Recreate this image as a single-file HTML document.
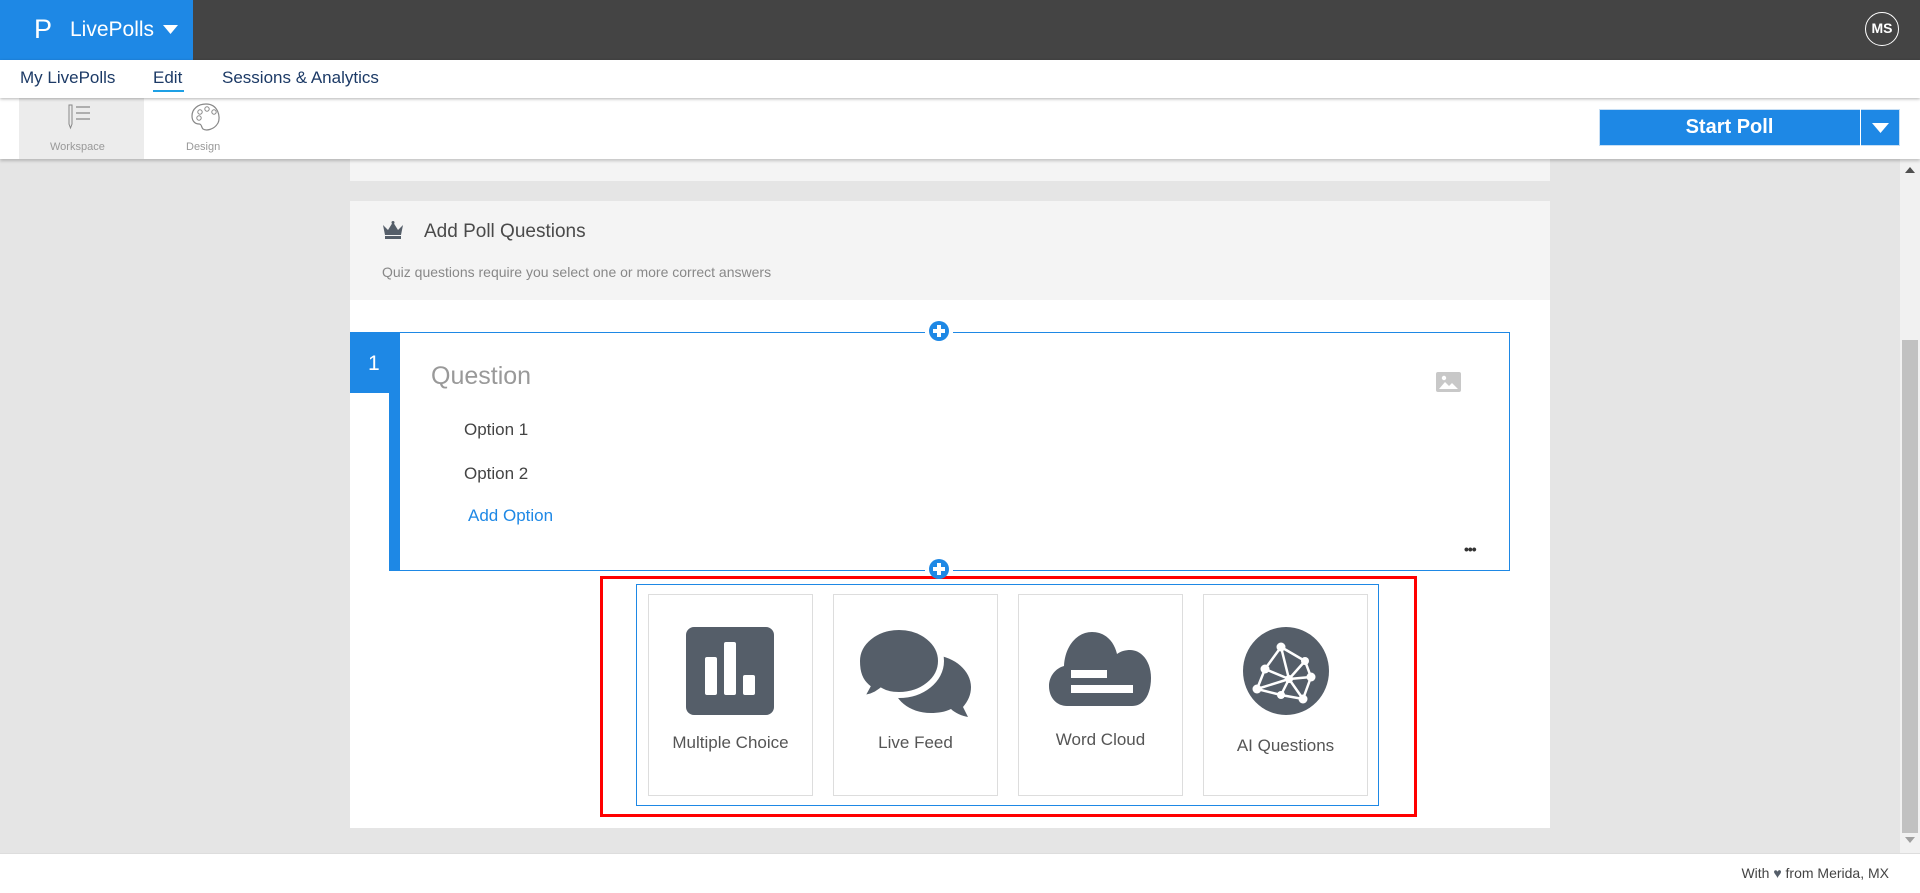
<!DOCTYPE html>
<html><head><meta charset="utf-8"><style>
*{margin:0;padding:0;box-sizing:border-box}
body{width:1920px;height:893px;overflow:hidden;background:#e5e5e5;font-family:"Liberation Sans",sans-serif;position:relative}
.a{position:absolute}
.t{position:absolute;white-space:nowrap;line-height:1}
</style></head><body>
<div class="a" style="left:0;top:0;width:1920px;height:60px;background:#444"></div>
<div class="a" style="left:0;top:0;width:193px;height:60px;background:#1e88e5"></div>
<div class="t" style="left:34px;top:16px;font-size:27px;color:#fff">P</div>
<div class="t" style="left:70px;top:19px;font-size:21px;color:#fff">LivePolls</div>
<svg class="a" style="left:163px;top:25px" width="15" height="9"><path d="M0 0H15L7.5 9Z" fill="#fff"/></svg>
<div class="a" style="left:1865px;top:12px;width:34px;height:34px;border:1.5px solid #fff;border-radius:50%;color:#fff;font-size:14px;font-weight:bold;text-align:center;line-height:31px">MS</div>

<div class="a" style="left:0;top:60px;width:1920px;height:38px;background:#fff;box-shadow:0 1px 3px rgba(0,0,0,.3);z-index:2"></div>
<div class="t" style="left:20px;top:69px;font-size:17px;color:#1c3a66;z-index:3">My LivePolls</div>
<div class="t" style="left:153px;top:69px;font-size:17px;color:#1c3a66;z-index:3">Edit</div>
<div class="a" style="left:153px;top:90px;width:31px;height:2px;background:#1ea0e5;z-index:3"></div>
<div class="t" style="left:222px;top:69px;font-size:17px;color:#1c3a66;z-index:3">Sessions &amp; Analytics</div>

<div class="a" style="left:0;top:98px;width:1920px;height:61px;background:#fff;box-shadow:0 2px 3px rgba(0,0,0,.2);z-index:1"></div>
<div class="a" style="left:19px;top:98px;width:125px;height:61px;background:#ececec;z-index:1"></div>
<svg class="a" style="left:66px;top:104px;z-index:2" width="30" height="26" viewBox="0 0 30 26"><path d="M3 1h3v19l-1.5 4L3 20Z" fill="none" stroke="#888" stroke-width="1"/><path d="M10 3h14M10 9h14M10 15h14" stroke="#888" stroke-width="1.2"/></svg>
<div class="t" style="left:50px;top:142px;font-size:11px;color:#999;z-index:2">Workspace</div>
<svg class="a" style="left:190px;top:102px;z-index:2" width="32" height="30" viewBox="0 0 32 30"><path d="M16 2C8 2 2 7 2 14c0 6 4 8 7 8 3 0 2 3 4 5 3 2 11 1 15-6 3-6 0-19-12-19Z" fill="none" stroke="#888" stroke-width="1.2"/><circle cx="10" cy="10" r="2.2" fill="none" stroke="#888"/><circle cx="17" cy="7" r="2.2" fill="none" stroke="#888"/><circle cx="24" cy="10" r="2.2" fill="none" stroke="#888"/><circle cx="9" cy="16" r="2.2" fill="none" stroke="#888"/></svg>
<div class="t" style="left:186px;top:142px;font-size:11px;color:#999;z-index:2">Design</div>
<div class="a" style="left:1599px;top:109px;width:301px;height:37px;background:#1e88e5;border:1px solid #c7dff5;z-index:2"></div>
<div class="t" style="left:1599px;top:117px;width:261px;text-align:center;font-size:20px;font-weight:bold;color:#fff;z-index:3">Start Poll</div>
<div class="a" style="left:1860px;top:109px;width:1px;height:37px;background:#fff;z-index:3"></div>
<svg class="a" style="left:1872px;top:123px;z-index:3" width="17" height="10"><path d="M0 0H17L8.5 10Z" fill="#fff"/></svg>

<div class="a" style="left:1900px;top:159px;width:20px;height:694px;background:#f1f1f1"></div>
<div class="a" style="left:1902px;top:340px;width:16px;height:493px;background:#c1c1c1"></div>
<svg class="a" style="left:1905px;top:167px" width="10" height="6"><path d="M0 6H10L5 0Z" fill="#505050"/></svg>
<svg class="a" style="left:1905px;top:837px" width="10" height="6"><path d="M0 0H10L5 6Z" fill="#a0a0a0"/></svg>

<div class="a" style="left:350px;top:159px;width:1200px;height:22px;background:#f4f4f4"></div>
<div class="a" style="left:350px;top:201px;width:1200px;height:99px;background:#f4f4f4"></div>
<svg class="a" style="left:382px;top:221px" width="22" height="18" viewBox="0 0 22 18"><path d="M1 4l5 5 5-8 5 8 5-5-2 10H3Z" fill="#555e69"/><circle cx="11" cy="1.5" r="1.5" fill="#555e69"/><rect x="3" y="15" width="16" height="3" fill="#555e69"/></svg>
<div class="t" style="left:424px;top:222px;font-size:19px;color:#4a4a4a">Add Poll Questions</div>
<div class="t" style="left:382px;top:265px;font-size:14px;color:#888">Quiz questions require you select one or more correct answers</div>
<div class="a" style="left:350px;top:300px;width:1200px;height:528px;background:#fff"></div>

<div class="a" style="left:389px;top:332px;width:1121px;height:239px;border:1px solid #1e88e5"></div>
<div class="a" style="left:389px;top:332px;width:11px;height:239px;background:#1e88e5"></div>
<div class="a" style="left:350px;top:332px;width:50px;height:61px;background:#1e88e5"></div>
<div class="t" style="left:368px;top:353px;font-size:21px;color:#fff">1</div>
<div class="a" style="left:925px;top:321px;width:28px;height:20px;background:#fff"></div>
<div class="a" style="left:929px;top:321px;width:20px;height:20px;border-radius:50%;background:#1e88e5"></div>
<div class="a" style="left:937px;top:325px;width:4px;height:12px;background:#fff"></div>
<div class="a" style="left:933px;top:329px;width:12px;height:4px;background:#fff"></div>
<div class="t" style="left:431px;top:364px;font-size:25px;color:#999">Question</div>
<svg class="a" style="left:1436px;top:372px" width="25" height="20" viewBox="0 0 25 20"><rect width="25" height="20" rx="2" fill="#c8c8c8"/><path d="M3 17l6-7 4 4 3-3 6 6Z" fill="#fff"/><circle cx="8" cy="6" r="2.2" fill="#fff"/></svg>
<div class="t" style="left:464px;top:421px;font-size:17px;color:#444">Option 1</div>
<div class="t" style="left:464px;top:465px;font-size:17px;color:#444">Option 2</div>
<div class="t" style="left:468px;top:507px;font-size:17px;color:#1e88e5">Add Option</div>
<div class="t" style="left:1464px;top:542px;font-size:14px;color:#333;letter-spacing:-1px;font-weight:bold">•••</div>
<div class="a" style="left:925px;top:560px;width:28px;height:20px;background:#fff"></div>
<div class="a" style="left:929px;top:559px;width:20px;height:20px;border-radius:50%;background:#1e88e5;z-index:2"></div>
<div class="a" style="left:937px;top:563px;width:4px;height:12px;background:#fff;z-index:2"></div>
<div class="a" style="left:933px;top:567px;width:12px;height:4px;background:#fff;z-index:2"></div>

<div class="a" style="left:600px;top:576px;width:817px;height:241px;border:3px solid #f00"></div>
<div class="a" style="left:636px;top:584px;width:743px;height:222px;border:1px solid #1e88e5"></div>

<div class="a" style="left:648px;top:594px;width:165px;height:202px;border:1px solid #ddd"></div>
<div class="a" style="left:833px;top:594px;width:165px;height:202px;border:1px solid #ddd"></div>
<div class="a" style="left:1018px;top:594px;width:165px;height:202px;border:1px solid #ddd"></div>
<div class="a" style="left:1203px;top:594px;width:165px;height:202px;border:1px solid #ddd"></div>

<svg class="a" style="left:686px;top:627px" width="88" height="88" viewBox="0 0 88 88"><rect width="88" height="88" rx="8" fill="#555e69"/><rect x="19" y="30" width="12" height="38" rx="2" fill="#fff"/><rect x="38" y="15" width="12" height="53" rx="2" fill="#fff"/><rect x="57" y="48" width="12" height="20" rx="2" fill="#fff"/></svg>
<svg class="a" style="left:857px;top:627px" width="116" height="90" viewBox="0 0 116 90"><path d="M78 28c20 2 36 16 36 32 0 8-3 14-8 20l5 10c-6-1-13-4-17-8-6 3-13 4-20 4-22 0-38-14-38-30 1-16 20-28 42-28Z" fill="#555e69"/><path d="M42 0c23 0 42 15 42 34S65 68 42 68c-6 0-13-1-18-4-5 4-12 7-20 7l6-11C3 54 0 46 0 34 0 15 19 0 42 0Z" fill="#555e69" stroke="#fff" stroke-width="6"/></svg>
<svg class="a" style="left:1049px;top:632px" width="102" height="74" viewBox="0 0 102 74"><path d="M18 74C8 74 0 66 0 54c0-10 7-18 15-20C16 14 28 0 43 0c13 0 22 9 25 22 4-3 9-4 13-4 12 0 21 12 21 28s-7 28-19 28Z" fill="#555e69"/><rect x="22" y="38" width="36" height="8" fill="#fff"/><rect x="22" y="53" width="62" height="8" fill="#fff"/></svg>
<svg class="a" style="left:1243px;top:627px" width="86" height="88" viewBox="0 0 86 88"><ellipse cx="43" cy="44" rx="43" ry="44" fill="#555e69"/><g stroke="#fff" stroke-width="2.5" fill="none"><path d="M38 20L22 42 14 62 38 68 60 72 68 50 62 34 38 20 46 52 68 50M22 42L46 52 38 68M38 20L62 34 46 52 60 72M14 62L46 52"/></g><g fill="#fff"><circle cx="38" cy="20" r="4.5"/><circle cx="22" cy="42" r="4.5"/><circle cx="14" cy="62" r="4.5"/><circle cx="38" cy="68" r="4"/><circle cx="60" cy="72" r="4.5"/><circle cx="68" cy="50" r="4.5"/><circle cx="62" cy="34" r="4"/><circle cx="46" cy="52" r="4"/></g></svg>

<div class="t" style="left:648px;top:734px;width:165px;text-align:center;font-size:17px;color:#555">Multiple Choice</div>
<div class="t" style="left:833px;top:734px;width:165px;text-align:center;font-size:17px;color:#555">Live Feed</div>
<div class="t" style="left:1018px;top:731px;width:165px;text-align:center;font-size:17px;color:#555">Word Cloud</div>
<div class="t" style="left:1203px;top:737px;width:165px;text-align:center;font-size:17px;color:#555">AI Questions</div>

<div class="a" style="left:0;top:853px;width:1920px;height:40px;background:#fff;border-top:1px solid #ddd"></div>
<div class="t" style="right:31px;top:866px;font-size:14px;color:#444">With <span style="color:#555e69">&#9829;</span> from Merida, MX</div>
</body></html>
